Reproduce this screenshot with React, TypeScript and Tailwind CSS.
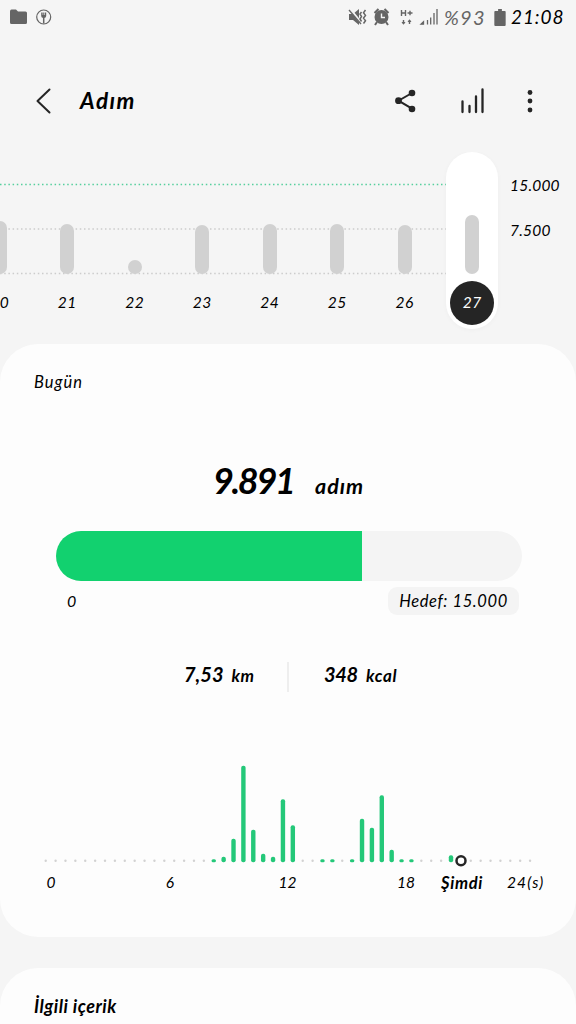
import React from "react";

type Day = { label: string; height: number; selected?: boolean };

const days: Day[] = [
  { label: "20", height: 53 },
  { label: "21", height: 50 },
  { label: "22", height: 14 },
  { label: "23", height: 49.5 },
  { label: "24", height: 50 },
  { label: "25", height: 50 },
  { label: "26", height: 49 },
  { label: "27", height: 59, selected: true },
];

const halfHours: Record<number, number> = {
  17: 3, 18: 5.5, 19: 23.5, 20: 96.5, 21: 32.5, 22: 8.5, 23: 5.5, 24: 63, 25: 37,
  28: 3, 29: 3, 31: 3, 32: 43.5, 33: 34.5, 34: 67, 35: 12.5, 36: 3, 37: 3, 41: 7,
};

function StatusBar() {
  return (
    <div className="flex h-[34px] shrink-0 items-center justify-between pr-[12px] pl-[9px] text-[#656565]">
      <svg width="44" height="20" viewBox="0 0 44 20" fill="currentColor">
        <path d="M1 4.500Q1 2.500 2.500 2.500H7l2 2h7.500q1.500 0 1.500 1.500v9.500q0 1.500-1.500 1.500h-14Q1 17 1 15.500Z" />
        <circle cx="34.700" cy="10" r="7" fill="none" stroke="currentColor" strokeWidth="1.200" />
        <path d="M32.200 5.500h5v3q0 2.500-2.500 2.500t-2.500-2.500Z" />
        <path d="M34.700 9v7.500" fill="none" stroke="currentColor" strokeWidth="1.500" />
        <path d="M33.900 5v3M35.500 5v3" stroke="#f5f5f5" strokeWidth="0.600" />
      </svg>
      <div className="flex items-center">
        <svg width="96" height="22" viewBox="0 0 96 22" fill="currentColor">
          <path d="M1 8h4l6-5v16l-6-5H1Z" />
          <path d="M2 3l12 15" stroke="#f5f5f5" strokeWidth="2.500" />
          <path d="M1 4l12 14" stroke="currentColor" strokeWidth="1.300" />
          <path d="M17.500 4l-2 2.700 2 2.700-2 2.700 2 2.700-2 2.700M13.500 6l-1.500 2 1.500 2.500-1.500 2.500 1.500 2.500" fill="none" stroke="currentColor" strokeWidth="1.500" />
          <circle cx="33.500" cy="11" r="7" />
          <path d="M26.500 7l4-4M36.500 3l4 4M29 16l-2 3M38 16l2 3" stroke="currentColor" strokeWidth="2" />
          <path d="M33.500 7.500v4H37" fill="none" stroke="#f5f5f5" strokeWidth="1.400" />
          <path d="M53.500 4v6M57.500 4v6M53.500 7h4M59.500 7h5M62 4.700v4.600" fill="none" stroke="currentColor" strokeWidth="1.400" />
          <path d="M55.500 14v4M61.500 14v4" stroke="currentColor" strokeWidth="1.400" />
          <path d="M53.500 16l2 2.700 2-2.700zM59.500 16l2-2.700 2 2.700z" />
          <path d="M73 18.200h2.500v-2.500zM79.500 18.500V14M82.700 18.500v-7M86 18.500V7M89 18.500V3" stroke="currentColor" strokeWidth="1.300" />
        </svg>
        <span className="w-[45px] text-[20px] tracking-[1.200px]">%93</span>
        <svg className="ml-[5px]" width="12" height="17" viewBox="0 0 12 18" fill="currentColor">
          <path d="M4 0h4v2h3q1 0 1 1v14q0 1-1 1H1q-1 0-1-1V3q0-1 1-1h3Z" />
        </svg>
        <span className="ml-[5px] w-[53px] text-[19px] tracking-[0.900px] text-black">21:08</span>
      </div>
    </div>
  );
}

function Header() {
  return (
    <header className="flex h-[118px] shrink-0 items-start justify-between pt-[50px] pr-[39px] pl-[34px]">
      <div className="flex h-[34px] items-center">
        <svg width="18" height="30" viewBox="0 0 18 30" fill="none" stroke="#252525" strokeWidth="2" strokeLinecap="round" strokeLinejoin="round">
          <path d="M15.500 3.500L3.500 15l12 11.500" />
        </svg>
        <h1 className="ml-[28px] text-[22.500px] font-bold tracking-[1.500px]">Adım</h1>
      </div>
      <svg width="146" height="34" viewBox="0 0 146 34" fill="#252525">
        <path d="M21 9L7.500 16.700l13.500 8" fill="none" stroke="#252525" strokeWidth="2" />
        <circle cx="21" cy="9" r="3.300" />
        <circle cx="7.500" cy="16.700" r="3.400" />
        <circle cx="21" cy="25" r="3.300" />
        <path d="M71.500 17.500v10.500M78.500 22v6M85 12.500V28M91.500 5.500V28" stroke="#252525" strokeWidth="2.300" strokeLinecap="round" />
        <circle cx="139" cy="8.500" r="2.400" />
        <circle cx="139" cy="17" r="2.400" />
        <circle cx="139" cy="26" r="2.400" />
      </svg>
    </header>
  );
}

function WeekChart() {
  return (
    <section className="relative flex h-[192px] shrink-0 overflow-hidden">
      <svg className="absolute top-0 left-0" width="447" height="130" fill="none" strokeDasharray="1.500 2.700">
        <path d="M0 32.500H447" stroke="#55cf9d" strokeWidth="1.700" />
        <path d="M0 77H447M0 121.500H447" stroke="#cccccc" strokeWidth="1.500" />
      </svg>
      <div className="relative -ml-[34px] flex shrink-0">
        {days.map((d) => (
          <div key={d.label} className="flex w-[67.500px] justify-center">
            <div
              className={
                "flex h-[177px] w-[52px] flex-col items-center rounded-full " +
                (d.selected ? "bg-white shadow-[0_1px_5px_rgba(0,0,0,0.030)]" : "")
              }
            >
              <div className="flex h-[122px] items-end">
                <div className="w-[14px] rounded-full bg-[#d1d1d1]" style={{ height: d.height }} />
              </div>
              <div
                className={
                  "mt-[7px] flex size-[44px] shrink-0 items-center justify-center rounded-full text-[15.500px] tracking-[0.600px] " +
                  (d.selected ? "bg-[#252525] text-white" : "")
                }
              >
                {d.label}
              </div>
            </div>
          </div>
        ))}
      </div>
      <div className="flex flex-col pt-[21px] pl-[4px] text-[15.500px] leading-[24px] tracking-[0.200px]">
        <span>15.000</span>
        <span className="mt-[21px]">7.500</span>
      </div>
    </section>
  );
}

function HourChart() {
  return (
    <div className="px-[35px]">
      <svg className="block" width="506" height="110" viewBox="35 760 506 110">
        {Array.from({ length: 50 }, (_, i) => {
          const x = 45.7 + i * 9.885;
          const h = halfHours[i];
          if (i === 42)
            return <circle key={i} cx="461" cy="860.700" r="4.500" fill="#fff" stroke="#252525" strokeWidth="2.500" />;
          if (h)
            return <rect key={i} x={x - 2.2} y={862.3 - h} width="4.400" height={h} rx={Math.min(2, h / 2)} fill="#24c879" />;
          return <circle key={i} cx={x} cy="860.700" r="1.200" fill="#d2d2d2" />;
        })}
      </svg>
      <div className="grid h-[26px] grid-cols-[32px_206px_32px_206px_30px] items-center text-center text-[15.500px]">
        <span>0</span>
        <div className="flex justify-center">6</div>
        <span className="-ml-[3px]">12</span>
        <div className="flex items-center justify-between pl-[89px]">
          <span className="w-[24px]">18</span>
          <span className="mr-[24px] w-[50px] text-[16.500px] font-bold tracking-[0.700px]">Şimdi</span>
        </div>
        <span className="-ml-[4px] w-[44px] text-left tracking-[1.100px]">24(s)</span>
      </div>
    </div>
  );
}

export default function App() {
  return (
    <main className="flex h-[1024px] w-[576px] flex-col overflow-hidden bg-[#f5f5f5] font-['Lato','Noto_Sans',sans-serif] text-black italic">
      <StatusBar />
      <Header />
      <WeekChart />
      <section className="h-[593px] shrink-0 rounded-[38px] bg-[#fdfdfd] pt-[26px]">
        <h2 className="pl-[34px] text-[16.500px] leading-[24px] tracking-[1px]">Bugün</h2>
        <div className="mt-[61px] flex h-[51px] items-baseline pl-[213px]">
          <span className="w-[102px] text-[36px] leading-[50px] font-bold tracking-[-2.300px]">9.891</span>
          <span className="text-[21.500px] font-bold tracking-[1px]">adım</span>
        </div>
        <div className="mt-[25px] ml-[56px] h-[50px] w-[466px] overflow-hidden rounded-full bg-[#f4f4f4]">
          <div className="h-full w-[306px] bg-[#12d16f]" />
        </div>
        <div className="mt-[6px] flex h-[28px] items-center justify-between pr-[57px] pl-[67px] text-[16px]">
          <span>0</span>
          <span className="flex h-[28px] w-[131px] items-center justify-center rounded-[9px] bg-[#f4f4f4] text-[16.500px] tracking-[0.600px]">
            Hedef: 15.000
          </span>
        </div>
        <div className="mt-[41px] flex h-[36px] items-center pl-[184px] font-bold">
          <div className="flex w-[103px] items-baseline gap-[8px]">
            <span className="text-[20px]">7,53</span>
            <span className="text-[17px] tracking-[0.500px]">km</span>
          </div>
          <div className="mt-[6px] h-[30px] w-[2px] bg-[#eeeeee]" />
          <div className="ml-[35px] flex items-baseline gap-[8px]">
            <span className="text-[20px] tracking-[-0.300px]">348</span>
            <span className="text-[17px] tracking-[0.700px]">kcal</span>
          </div>
        </div>
        <div className="mt-[68px]">
          <HourChart />
        </div>
      </section>
      <section className="mt-[31px] h-[56px] shrink-0 rounded-t-[38px] bg-[#fdfdfd] pt-[26px] pl-[34px]">
        <h2 className="text-[18px] leading-[24px] font-bold tracking-[0.500px]">İlgili içerik</h2>
      </section>
    </main>
  );
}
